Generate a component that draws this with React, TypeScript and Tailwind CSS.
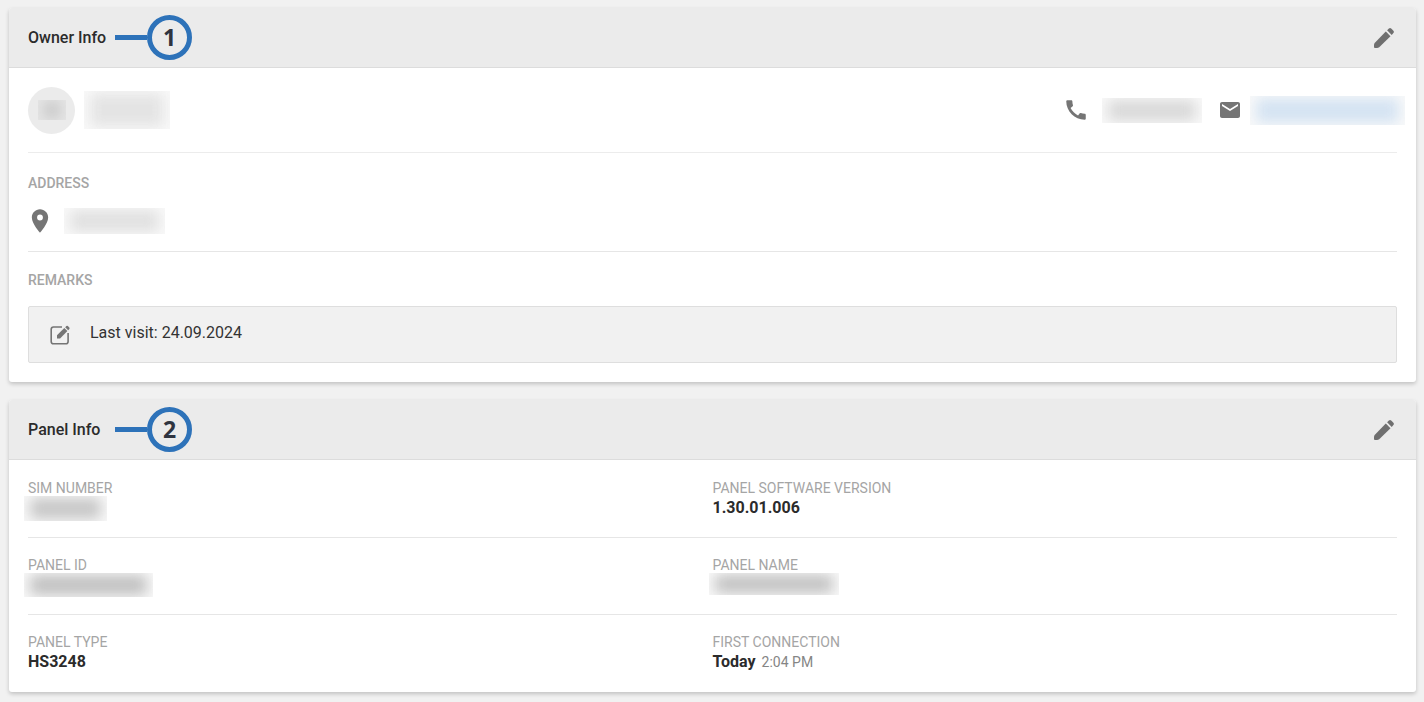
import type { ReactNode } from 'react';
import { MdCall, MdMail, MdPlace } from 'react-icons/md';

function PencilIcon() {
  return (
    <svg viewBox="0 0 20 20" className="size-5" fill="currentColor" aria-hidden="true">
      <path d="M11.8 3.5 16.5 8.2 5.2 19.2 Q4.2 20 3 20 H1 Q0 20 0 19 V17.2 Q0 15.8 0.9 14.8 Z" />
      <path d="M13.1 2.3 14.9 0.6 Q16.1 -0.4 17.2 0.6 L19.4 2.8 Q20.4 3.9 19.4 5.1 L17.7 6.9 Z" />
    </svg>
  );
}

function NoteIcon() {
  return (
    <svg viewBox="0 0 20 20" className="size-5 shrink-0" fill="none" aria-hidden="true">
      <path
        d="M12 2 H3.5 Q1.2 2 1.2 4.3 V16.5 Q1.2 18.8 3.5 18.8 H15.8 Q18.1 18.8 18.1 16.5 V8"
        stroke="currentColor"
        strokeWidth="1.6"
      />
      <path d="M7 13.5 V10.3 L14.3 3 17.4 6.1 10.1 13.5 Z" fill="currentColor" />
      <path d="M15.2 2.2 16.4 1 Q17.2 0.4 17.9 1 L19.3 2.4 Q19.9 3.1 19.3 3.9 L18.2 5.2 Z" fill="currentColor" />
    </svg>
  );
}

function Redacted({ size, fill, className = '' }: { size: string; fill: string; className?: string }) {
  return (
    <span className={`block shrink-0 overflow-hidden bg-black/2 px-1.5 py-0.5 ${size} ${className}`} aria-hidden="true">
      <span className={`block size-full blur-[7px] ${fill}`} />
    </span>
  );
}

function Callout({ n }: { n: number }) {
  return (
    <span className="flex items-center">
      <span className="h-[5px] w-8 bg-[#2d72b9]" />
      <span className="flex size-[45px] items-center justify-center rounded-full border-[5px] border-[#2d72b9] bg-[#ebebeb] font-['Open_Sans',sans-serif] text-[23px] leading-none font-bold text-[#2f3440]">
        {n}
      </span>
    </span>
  );
}

function Card({ title, n, children }: { title: string; n: number; children: ReactNode }) {
  return (
    <section className="rounded-[3px] bg-white shadow-[0_2px_4px_rgba(0,0,0,0.2)]">
      <header className="flex h-[60px] items-center rounded-t-[3px] border-b border-[#dcdcdc] bg-[#ebebeb] pr-[22px] pl-[19px]">
        <h2 className="min-w-[87px] text-base font-medium text-[#2b2b2b]">{title}</h2>
        <Callout n={n} />
        <button type="button" aria-label={`Edit ${title}`} className="ml-auto text-[#6f6f6f]">
          <PencilIcon />
        </button>
      </header>
      {children}
    </section>
  );
}

function Field({ label, children }: { label: string; children: ReactNode }) {
  return (
    <div>
      <dt className="text-sm leading-[19px] text-[#a5a5a5]">{label}</dt>
      <dd className="text-base leading-[19px] font-bold text-[#2b2b2b]">{children}</dd>
    </div>
  );
}

const row = 'grid h-[77px] grid-cols-2 border-b border-[#e6e6e6] pt-[18px] last:border-b-0';

export default function App() {
  return (
    <main className="flex min-h-screen flex-col gap-[18px] bg-[#f1f1f1] pt-2 pr-2 pb-[10px] pl-[9px] font-[Roboto,sans-serif]">
      <Card title="Owner Info" n={1}>
        <div className="px-[19px] pb-[19px]">
          <div className="flex h-[85px] items-center border-b border-[#ececec] text-[#757575]">
            <span className="flex size-[47px] items-center justify-center rounded-full bg-[#ebebeb]">
              <Redacted size="h-5 w-7" fill="bg-[#c4c4c4]" />
            </span>
            <Redacted size="h-[38px] w-[86px]" fill="bg-[#e4e4e4]" className="ml-[9px]" />
            <MdCall className="ml-auto size-[26px]" />
            <Redacted size="h-[25px] w-[100px]" fill="bg-[#d8d8d8]" className="ml-[13px]" />
            <MdMail className="ml-4 size-6" />
            <Redacted size="h-[29px] w-[155px]" fill="bg-[#d4e3f2]" className="-mr-2 ml-2" />
          </div>
          <div className="h-[99px] border-b border-[#e6e6e6] pt-5 text-[#757575]">
            <h3 className="text-sm leading-5 font-medium text-[#a5a5a5]">ADDRESS</h3>
            <div className="mt-3.5 flex items-center">
              <MdPlace className="-ml-0.5 size-7" />
              <Redacted size="h-[26px] w-[101px]" fill="bg-[#e0e0e0]" className="ml-2.5" />
            </div>
          </div>
          <h3 className="pt-[18px] text-sm leading-5 font-medium text-[#a5a5a5]">REMARKS</h3>
          <div className="mt-4 flex h-[57px] items-center rounded-[2px] border border-[#dedede] bg-[#f1f1f1] pl-[21px] text-[#757575]">
            <NoteIcon />
            <p className="ml-5 pb-1 text-base leading-6 text-[#333]">Last visit: 24.09.2024</p>
          </div>
        </div>
      </Card>

      <Card title="Panel Info" n={2}>
        <dl className="px-[19px] pt-px">
          <div className={row}>
            <Field label="SIM NUMBER">
              <Redacted size="h-[25px] w-[83px]" fill="bg-[#c6c6c6]" className="-mt-0.5 -ml-1" />
            </Field>
            <Field label="PANEL SOFTWARE VERSION">1.30.01.006</Field>
          </div>
          <div className={row}>
            <Field label="PANEL ID">
              <Redacted size="h-6 w-[129px]" fill="bg-[#c0c0c0]" className="-mt-0.5 -ml-1" />
            </Field>
            <Field label="PANEL NAME">
              <Redacted size="h-[22px] w-[130px]" fill="bg-[#c0c0c0]" className="-mt-0.5 -ml-1" />
            </Field>
          </div>
          <div className={row}>
            <Field label="PANEL TYPE">HS3248</Field>
            <Field label="FIRST CONNECTION">
              Today <span className="ml-0.5 text-sm leading-none font-normal text-[#858585]">2:04 PM</span>
            </Field>
          </div>
        </dl>
      </Card>
    </main>
  );
}
